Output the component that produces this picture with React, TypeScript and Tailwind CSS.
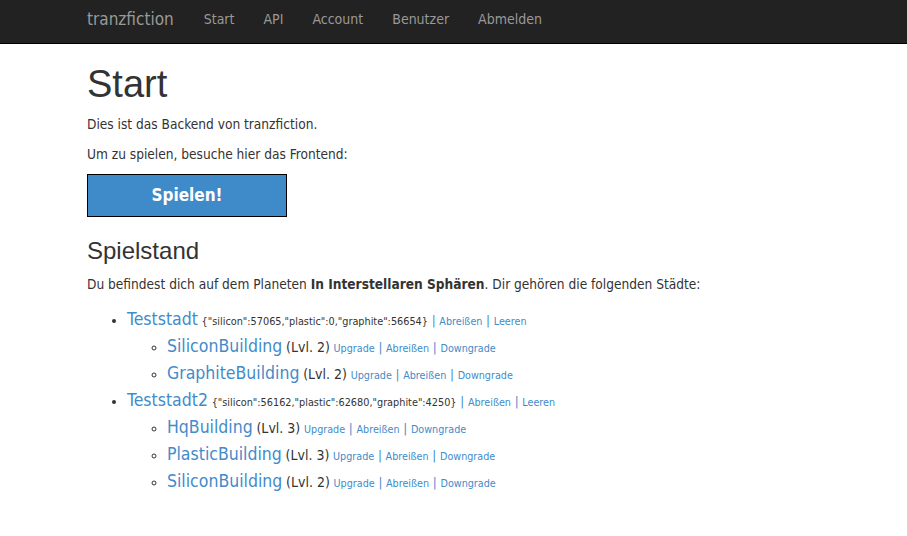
const body = { fontFamily: '"DejaVu Sans Condensed", "DejaVu Sans", Verdana, sans-serif' };
const head = { fontFamily: '"Liberation Sans", Helvetica, Arial, sans-serif' };

const navLinks = ["Start", "API", "Account", "Benutzer", "Abmelden"];

type Building = { name: string; lvl: number };
type City = { name: string; res: string; buildings: Building[] };

const cities: City[] = [
  {
    name: "Teststadt",
    res: '{"silicon":57065,"plastic":0,"graphite":56654}',
    buildings: [
      { name: "SiliconBuilding", lvl: 2 },
      { name: "GraphiteBuilding", lvl: 2 },
    ],
  },
  {
    name: "Teststadt2",
    res: '{"silicon":56162,"plastic":62680,"graphite":4250}',
    buildings: [
      { name: "HqBuilding", lvl: 3 },
      { name: "PlasticBuilding", lvl: 3 },
      { name: "SiliconBuilding", lvl: 2 },
    ],
  },
];

function Sep() {
  return <span className="text-[#428bca]"> | </span>;
}

export default function App() {
  return (
    <div className="min-h-[536px] bg-white text-[#333]" style={body}>
      {/* Navbar */}
      <div className="h-[44px] bg-[#222] border-b border-black">
        <div className="flex items-start h-full pl-[87px] pt-[8px]">
          <span className="text-[17px] leading-[22px] text-[#999] mr-[30px]">tranzfiction</span>
          <div className="flex gap-[29px] text-[14px] leading-[22px] text-[#999]">
            {navLinks.map((l) => (
              <span key={l}>{l}</span>
            ))}
          </div>
        </div>
      </div>

      <div className="pl-[87px]">
        <h1 className="text-[38px] font-normal text-[#333] leading-[38px] pt-[21px] mb-[11px]" style={head}>
          Start
        </h1>
        <p className="text-[13.6px] leading-[20px] mb-[10px]">Dies ist das Backend von tranzfiction.</p>
        <p className="text-[13.6px] leading-[20px] mb-[10px]">Um zu spielen, besuche hier das Frontend:</p>
        <div className="w-[200px] h-[43px] bg-[#3f8bca] border border-black flex items-center justify-center">
          <span className="text-[17px] font-bold text-white">Spielen!</span>
        </div>

        <h2 className="text-[24px] font-normal text-[#333] leading-[40px] mt-[14px]" style={head}>
          Spielstand
        </h2>
        <p className="text-[13.6px] leading-[20px] mt-[3px] mb-[10px]">
          Du befindest dich auf dem Planeten <b>In Interstellaren Sphären</b>. Dir gehören die folgenden Städte:
        </p>

        <ul className="list-disc pl-[40px] pt-[3px] text-[13px]">
          {cities.map((c) => (
            <li key={c.name} className="leading-[24px]">
              <span className="text-[17.5px] text-[#428bca]">{c.name}</span>{" "}
              <span className="text-[10.8px]">{c.res}</span>
              <Sep />
              <span className="text-[10.7px] text-[#428bca]">Abreißen</span>
              <Sep />
              <span className="text-[10.7px] text-[#428bca]">Leeren</span>
              <ul className="list-[circle] pl-[40px]">
                {c.buildings.map((b, i) => (
                  <li key={i} className="leading-[24px]">
                    <span className="text-[17.5px] text-[#428bca]">{b.name}</span>{" "}
                    <span className="text-[14px]">(Lvl. {b.lvl})</span>{" "}
                    <span className="text-[10.7px] text-[#428bca]">Upgrade</span>
                    <Sep />
                    <span className="text-[10.7px] text-[#428bca]">Abreißen</span>
                    <Sep />
                    <span className="text-[10.7px] text-[#428bca]">Downgrade</span>
                  </li>
                ))}
              </ul>
            </li>
          ))}
        </ul>
      </div>
    </div>
  );
}
